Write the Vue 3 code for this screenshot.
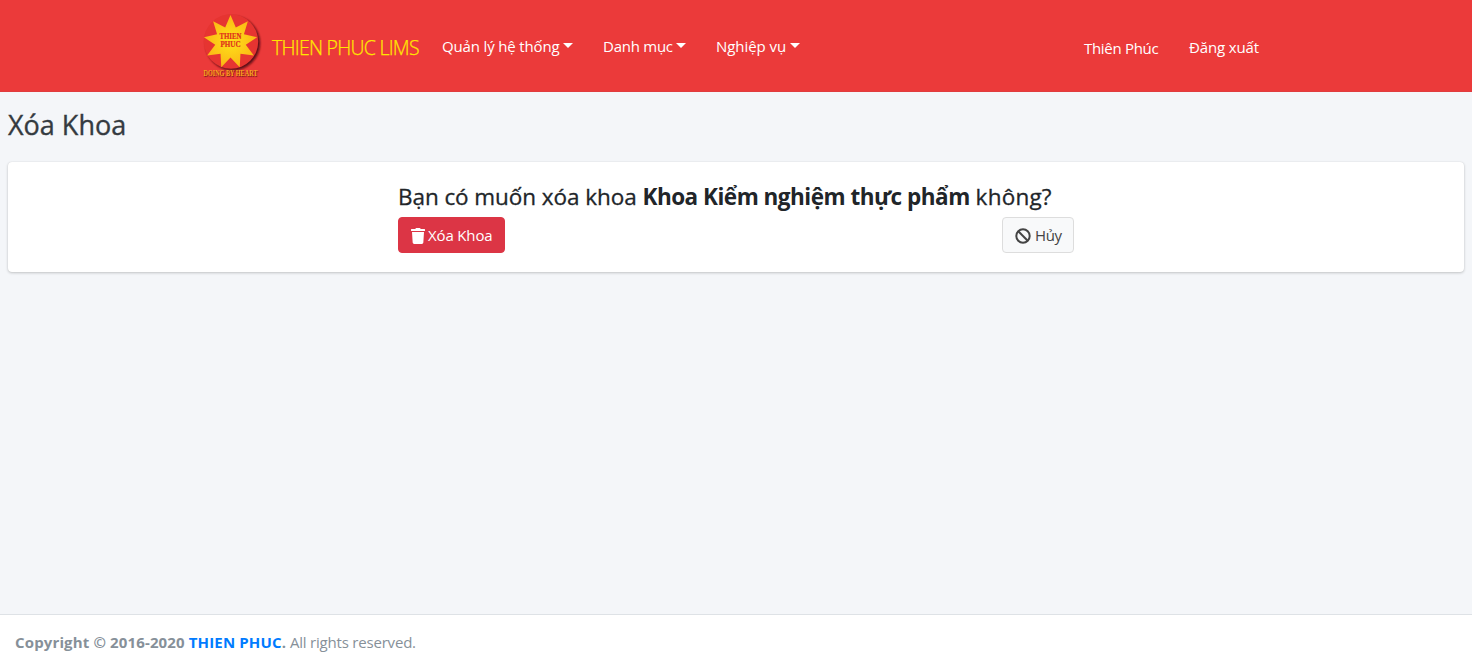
<script setup>
const menus = [
  { label: 'Quản lý hệ thống', cls: 'm1' },
  { label: 'Danh mục', cls: 'm2' },
  { label: 'Nghiệp vụ', cls: 'm3' },
]
const star = Array.from({ length: 18 }, (_, i) => {
  const r = i % 2 ? 15.5 : 27
  const a = (i * Math.PI) / 9
  return `${(30.5 + r * Math.sin(a)).toFixed(2)},${(33 - r * Math.cos(a)).toFixed(2)}`
}).join(' ')
</script>

<template>
  <div class="page">
    <header class="navbar">
      <a class="brand">
        <svg class="logo" width="64" height="76" viewBox="0 -2 64 76">
          <defs>
            <radialGradient id="gold">
              <stop offset="0" stop-color="#ffe21a" />
              <stop offset="1" stop-color="#fbb615" />
            </radialGradient>
            <filter id="soft" x="-20%" y="-20%" width="140%" height="140%">
              <feGaussianBlur stdDeviation="1.3" />
            </filter>
          </defs>
          <circle cx="32.8" cy="34.3" r="27.3" fill="#5c1015" filter="url(#soft)" />
          <circle cx="31" cy="32.5" r="27.2" fill="#e63431" />
          <polygon :points="star" fill="url(#gold)" />
          <g font-family="Liberation Serif, serif" font-weight="700" text-anchor="middle">
            <text x="30.5" y="29.9" font-size="7.500" textLength="22" lengthAdjust="spacingAndGlyphs" fill="#e0301c" stroke="#e0301c" stroke-width=".2">THIEN</text>
            <text x="30.5" y="37.500" font-size="7.500" textLength="20" lengthAdjust="spacingAndGlyphs" fill="#e0301c" stroke="#e0301c" stroke-width=".2">PHUC</text>
            <text class="motto" x="30.5" y="66.900" font-size="7.500" textLength="54" lengthAdjust="spacingAndGlyphs" fill="#f9a81c">DOING BY HEART</text>
          </g>
        </svg>
        <span class="brand-text">THIEN PHUC LIMS</span>
      </a>
      <nav class="menu">
        <a v-for="m in menus" :key="m.label" class="item" :class="m.cls"><span>{{ m.label }}</span><i class="caret"></i></a>
      </nav>
      <div class="user">
        <span class="name">Thiên Phúc</span>
        <a class="logout">Đăng xuất</a>
      </div>
    </header>
    <main class="content">
      <h1>Xóa Khoa</h1>
      <section class="card">
        <div class="confirm">
          <h4><span class="q1">Bạn có muốn xóa khoa</span> <b>Khoa Kiểm nghiệm thực phẩm</b> <span class="q2">không?</span></h4>
          <div class="actions">
            <button class="btn danger">
              <svg width="14" height="16" viewBox="0 0 448 512"><path fill="currentColor" d="M432 32H312l-9.400-18.700A24 24 0 0 0 281.100 0H166.800a23.700 23.700 0 0 0-21.400 13.300L136 32H16A16 16 0 0 0 0 48v32a16 16 0 0 0 16 16h416a16 16 0 0 0 16-16V48a16 16 0 0 0-16-16zM53.200 467a48 48 0 0 0 47.900 45h245.800a48 48 0 0 0 47.900-45L416 128H32z" /></svg>
              <span>Xóa Khoa</span>
            </button>
            <button class="btn light">
              <svg width="16" height="16" viewBox="0 0 16 16" fill="none" stroke="currentColor" stroke-width="2"><circle cx="8" cy="8" r="6.700" /><path d="M3.300 3.300l9.400 9.400" /></svg>
              <span>Hủy</span>
            </button>
          </div>
        </div>
      </section>
    </main>
    <footer class="footer"><strong>Copyright © 2016-2020 <a>THIEN PHUC</a>.</strong> <span>All rights reserved.</span></footer>
  </div>
</template>

<style>
body { margin: 0; }
</style>

<style scoped>
* { box-sizing: border-box; }
.page {
  height: 668px;
  display: flex;
  flex-direction: column;
  background: #f4f6f9;
  font: 400 16px/24px "Open Sans", "Noto Sans", sans-serif;
  color: #212529;
  white-space: nowrap;
  overflow: hidden;
}
.navbar {
  height: 92px;
  flex: none;
  display: flex;
  align-items: center;
  padding: 0 213px 0 200px;
  background: #eb3a3a;
  border-bottom: 1px solid #e03c3f;
  color: #fff;
  font-size: 15px;
}
.brand { display: flex; align-items: center; width: 242px; }
.logo { flex: none; display: block; overflow: visible; margin-top: -1px; }
.motto { text-shadow: 1px 1px 1px #701515; }
.brand-text { margin: 4px 0 0 8px; font-size: 19.500px; font-weight: 300; letter-spacing: -.75px; color: #ffe600; -webkit-text-stroke: .25px #ffe600; }
.menu { display: flex; }
.item { display: flex; align-items: center; margin-top: 1px; letter-spacing: -.15px; }
.m1 { width: 161px; }
.m2 { width: 113px; letter-spacing: -.25px; }
.m3 { letter-spacing: -.05px; }
.caret { margin: -2px 0 0 4px; border: 5px solid transparent; border-top-color: #fff; border-bottom: 0; }
.m1 .caret { margin-left: 3px; }
.m2 .caret { margin-left: 3px; }
.user { display: flex; margin-left: auto; letter-spacing: -.15px; }
.name { margin-top: 5px; padding-left: 1px; width: 106px; letter-spacing: -.3px; }
.logout { margin-top: 4px; width: 70px; }
.content { flex: 1; padding: 0 8px; }
h1 { margin: 16px 0 0; font-size: 27px; line-height: 34px; font-weight: 400; color: #343a40; -webkit-text-stroke: .35px #343a40; }
.card {
  margin-top: 20px;
  height: 110px;
  padding-top: 20px;
  background: #fff;
  border-radius: 4px;
  box-shadow: 0 0 1px rgba(0, 0, 0, .125), 0 1px 3px rgba(0, 0, 0, .2);
}
.confirm { width: 676px; margin: 0 auto; }
h4 { margin: 0 0 6px; font-size: 22.500px; line-height: 29px; font-weight: 400; }
.q1 { letter-spacing: -.07px; -webkit-text-stroke: .3px #212529; }
.q2 { letter-spacing: .22px; -webkit-text-stroke: .3px #212529; }
b { font-weight: 700; letter-spacing: -.5px; }
.actions { display: flex; justify-content: space-between; }
.btn {
  display: flex;
  align-items: center;
  height: 36px;
  padding: 0 12px 0 12px;
  gap: 4px;
  border: 1px solid;
  border-radius: 4px;
  font: 400 15px/24px "Open Sans", "Noto Sans", sans-serif;
  letter-spacing: -.15px;
}
.btn svg { flex: none; margin-top: 1px; }
.danger { width: 107px; gap: 3px; background: #dc3545; border-color: #dc3545; color: #fff; }
.light { width: 72px; background: #f8f9fa; border-color: #ddd; color: #444; }
.light span { letter-spacing: -.4px; }
.footer {
  height: 54px;
  flex: none;
  padding: 15px 15px 0;
  background: #fff;
  border-top: 1px solid #dee2e6;
  color: #869099;
  font-size: 15px;
}
.footer strong { letter-spacing: .14px; }
.footer span { letter-spacing: -.2px; }
.footer a { color: #007bff; }
</style>
